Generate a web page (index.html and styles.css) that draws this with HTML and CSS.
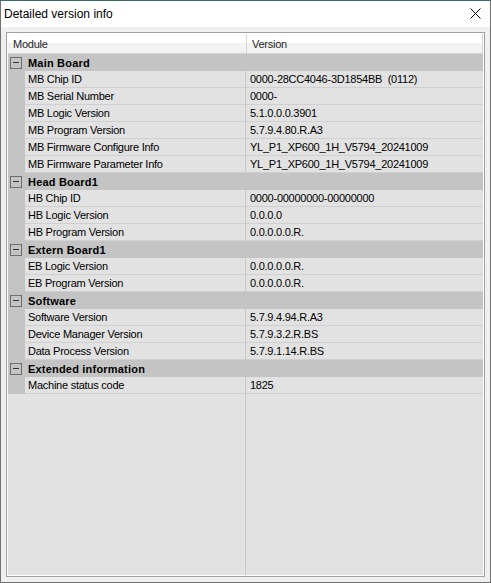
FILE: index.html
```html
<!DOCTYPE html>
<html lang="en">
  <head>
    <meta charset="UTF-8" />
    <meta name="viewport" content="width=device-width, initial-scale=1.0" />
    <title>Detailed version info</title>
    <link rel="stylesheet" href="styles.css">
  </head>
  <body>
    <div class="window">
      <div class="titlebar">
        <span class="title">Detailed version info</span>
        <span class="close">
          <svg width="11" height="11" viewBox="0 0 11 11">
            <path d="M0.5 0.5 L10.5 10.5 M10.5 0.5 L0.5 10.5" stroke="#000" stroke-width="1" fill="none" />
          </svg>
        </span>
      </div>

      <div class="client">
        <div class="list">
          <div class="list-inner">
            <div class="header">
              <div class="hcell hcell-name">Module</div>
              <div class="hcell hcell-val">Version</div>
            </div>

            <div class="rows">
              <div class="group"><span class="toggle"></span><span class="group-label">Main Board</span></div>
              <div class="row"><span class="gutter"></span><span class="name">MB Chip ID</span><span class="val">0000-28CC4046-3D1854BB&nbsp; (0112)</span></div>
              <div class="row"><span class="gutter"></span><span class="name">MB Serial Number</span><span class="val">0000-</span></div>
              <div class="row"><span class="gutter"></span><span class="name">MB Logic Version</span><span class="val">5.1.0.0.0.3901</span></div>
              <div class="row"><span class="gutter"></span><span class="name">MB Program Version</span><span class="val">5.7.9.4.80.R.A3</span></div>
              <div class="row"><span class="gutter"></span><span class="name">MB Firmware Configure Info</span><span class="val">YL_P1_XP600_1H_V5794_20241009</span></div>
              <div class="row"><span class="gutter"></span><span class="name">MB Firmware Parameter Info</span><span class="val">YL_P1_XP600_1H_V5794_20241009</span></div>

              <div class="group"><span class="toggle"></span><span class="group-label">Head Board1</span></div>
              <div class="row"><span class="gutter"></span><span class="name">HB Chip ID</span><span class="val">0000-00000000-00000000</span></div>
              <div class="row"><span class="gutter"></span><span class="name">HB Logic Version</span><span class="val">0.0.0.0</span></div>
              <div class="row"><span class="gutter"></span><span class="name">HB Program Version</span><span class="val">0.0.0.0.0.R.</span></div>

              <div class="group"><span class="toggle"></span><span class="group-label">Extern Board1</span></div>
              <div class="row"><span class="gutter"></span><span class="name">EB Logic Version</span><span class="val">0.0.0.0.0.R.</span></div>
              <div class="row"><span class="gutter"></span><span class="name">EB Program Version</span><span class="val">0.0.0.0.0.R.</span></div>

              <div class="group"><span class="toggle"></span><span class="group-label">Software</span></div>
              <div class="row"><span class="gutter"></span><span class="name">Software Version</span><span class="val">5.7.9.4.94.R.A3</span></div>
              <div class="row"><span class="gutter"></span><span class="name">Device Manager Version</span><span class="val">5.7.9.3.2.R.BS</span></div>
              <div class="row"><span class="gutter"></span><span class="name">Data Process Version</span><span class="val">5.7.9.1.14.R.BS</span></div>

              <div class="group"><span class="toggle"></span><span class="group-label">Extended information</span></div>
              <div class="row"><span class="gutter"></span><span class="name">Machine status code</span><span class="val">1825</span></div>
            </div>
          </div>
        </div>
      </div>
    </div>
  </body>
</html>
```

FILE: styles.css
```css
* {
  margin: 0;
  padding: 0;
  box-sizing: border-box;
}

body {
  font-family: "Liberation Sans", Arial, sans-serif;
  background: #f0f0f0;
}

.window {
  width: 491px;
  height: 583px;
  display: flex;
  flex-direction: column;
  border: 1px solid #707070;
  border-top-color: #3d6a6c;
  background: #f0f0f0;
}

.titlebar {
  height: 26px;
  flex: none;
  background: #fff;
  display: flex;
  align-items: center;
  justify-content: space-between;
  padding: 0 9px 1px 3px;
}

.title {
  font-size: 12px;
  color: #000;
}

.close {
  display: flex;
}

.client {
  flex: 1;
  padding: 5px;
  display: flex;
}

.list {
  flex: 1;
  display: flex;
  border: 1px solid #a0a0a0;
}

.list-inner {
  flex: 1;
  display: flex;
  flex-direction: column;
  border: 1px solid #fff;
  font-size: 11px;
  letter-spacing: -0.25px;
  color: #000;
}

.header {
  height: 20px;
  flex: none;
  display: flex;
  background: linear-gradient(to bottom, #ffffff 0, #ffffff 9px, #f2f2f2 9px, #f2f2f2 100%);
  border-bottom: 1px solid #d5d5d5;
}

.hcell {
  display: flex;
  align-items: center;
  padding-left: 5px;
  color: #1e1e1e;
}

.hcell-name {
  width: 239px;
  border-right: 1px solid #d5d5d5;
}

.hcell-val {
  flex: 1;
  border-right: 1px solid #d5d5d5;
}

.rows {
  flex: 1;
  background: linear-gradient(to right, transparent 237px, #c9c9c9 237px, #c9c9c9 238px, transparent 238px), #e2e2e2;
}

.group {
  height: 17px;
  display: flex;
  align-items: center;
  background: #c4c4c4;
}

.toggle {
  width: 12px;
  height: 12px;
  margin-left: 2px;
  border: 1px solid #6d6d6d;
  position: relative;
}

.toggle::after {
  content: "";
  position: absolute;
  left: 2px;
  right: 2px;
  top: 4px;
  height: 1px;
  background: #333;
}

.group-label {
  font-weight: bold;
  letter-spacing: 0.2px;
  margin-left: 6px;
}

.row {
  height: 17px;
  display: flex;
}

.gutter {
  width: 17px;
  flex: none;
  background: #c4c4c4;
}

.name {
  width: 221px;
  flex: none;
  padding-left: 3px;
  display: flex;
  align-items: center;
  border-right: 1px solid #c9c9c9;
  border-bottom: 1px solid #d0d0d0;
}

.val {
  flex: 1;
  padding-left: 4px;
  display: flex;
  align-items: center;
  border-bottom: 1px solid #d0d0d0;
  white-space: pre;
}
```
